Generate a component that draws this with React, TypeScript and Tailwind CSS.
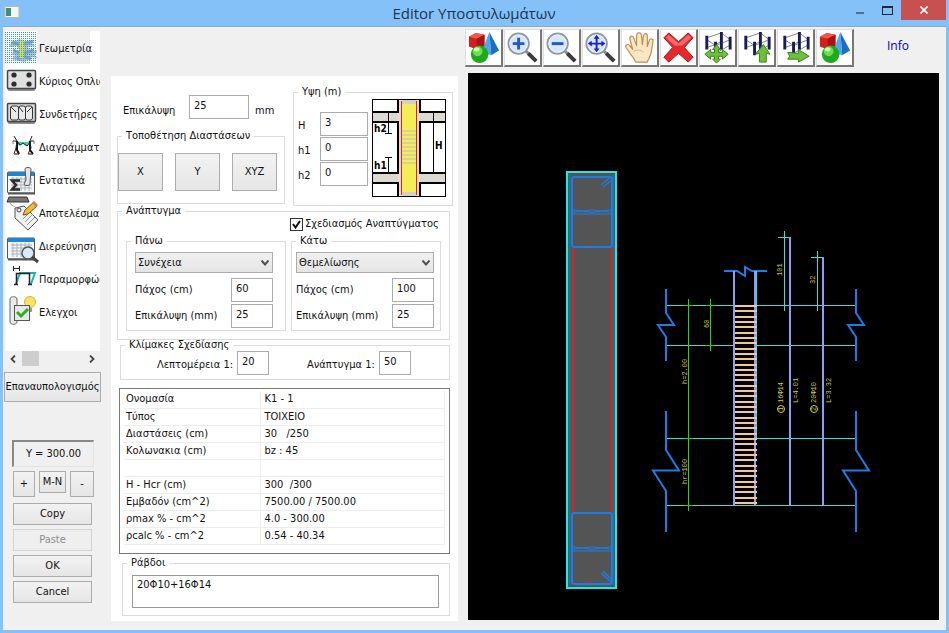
import type { ReactNode } from "react";

/* ---------- sidebar icons (32 x 32) ---------- */

function GeometryIcon() {
  return (
    <>
      <defs>
        <pattern id="dots" width="2" height="2" patternUnits="userSpaceOnUse">
          <rect width="1" height="1" fill="#2f93e0" />
        </pattern>
      </defs>
      <path d="M6 11l8-4 7 2 9-1-3 3 3 3-7 1 3 5 7-2-3 5 3 3-8-1-5 5-6-1-8-2 4-3-4-2 8-4-2-4-8 1z" fill="#b3c3cc" />
      <path d="M7 10l9 3 12-4M8 18l9 4 12-4M12 27l6-3 8 3" fill="none" stroke="#8aa3bd" strokeWidth="3" />
      <path d="M14 9h5v17h-5z" fill="#d7e832" />
      <rect width="32" height="32" fill="url(#dots)" />
    </>
  );
}

function MainBarsIcon() {
  return (
    <>
      <rect x="2.5" y="7" width="28" height="19" rx="2" fill="#8d8d8d" />
      <rect x="2.5" y="5.5" width="28" height="18" rx="1" fill="#e0e0e0" stroke="#444" strokeWidth="1.5" />
      <g fill="#2c2c2c">
        <circle cx="9" cy="10" r="2.6" />
        <circle cx="24" cy="10" r="2.6" />
        <circle cx="9" cy="19" r="2.6" />
        <circle cx="24" cy="19" r="2.6" />
      </g>
    </>
  );
}

function StirrupsIcon() {
  return (
    <>
      <rect x="2.5" y="7" width="28" height="19" rx="2" fill="#8d8d8d" />
      <rect x="2.5" y="5.5" width="28" height="18" rx="1" fill="#dcdcdc" stroke="#444" strokeWidth="1.5" />
      <g fill="#e9e9e9" stroke="#333">
        <rect x="5.5" y="8" width="8" height="14" rx="2" />
        <rect x="13.5" y="8" width="7" height="14" rx="2" />
        <rect x="20.5" y="8" width="7" height="14" rx="2" />
        <path d="M6 9l5 5M14 9l4 5M27 9l-5 5" fill="none" />
      </g>
    </>
  );
}

function DiagramsIcon() {
  return (
    <>
      <path d="M11 10l5 1h5l5-1-4 5-4-2-4 2z" fill="#38d6b4" />
      <path d="M8 10h4l3 4 3-2 4 3 4-5h3" fill="none" stroke="#222" />
      <path d="M12 10v9l2 4M25 10v9l3 4" fill="none" stroke="#111" strokeWidth="2" />
      <path d="M9 5l3 5-1 7-2 6h5M27 5l-2 5 1 7-3 6h5" fill="none" stroke="#222" />
      <path d="M8 10v3M29 10v3M9 23h3M23 23h3" stroke="#e04848" />
    </>
  );
}

function GridTable() {
  return (
    <>
      <rect x="2.5" y="8" width="27" height="21" rx="1" fill="#f4f6f8" stroke="#555" />
      <rect x="3" y="8" width="26" height="4" fill="#1f86d6" />
      <path d="M6 15h21M6 18h21M6 21h21M6 24h21M8 13v14M12 13v14M16 13v14M20 13v14M24 13v14" stroke="#a9b3bb" />
      <path d="M3 29.500h27" stroke="#555" strokeWidth="2" />
    </>
  );
}

function StressIcon() {
  return (
    <>
      <GridTable />
      <path d="M15 16.500h-8l4 4.500-4 4.500h8" fill="none" stroke="#2b2b2b" strokeWidth="2.5" />
      <path d="M20 5c0-2 6-2 6 0l-1 15c0 2-6 2-6 0l2-4z" fill="#e6e6e6" stroke="#555" />
    </>
  );
}

function ResultsIcon() {
  return (
    <>
      <path d="M4 0h18l2 5h-22z" fill="#777" stroke="#333" />
      <path d="M10 11l9-2 14 14-10 10-13-12z" fill="#eef1f4" stroke="#555" />
      <circle cx="14" cy="13" r="2" fill="none" stroke="#444" />
      <path d="M18 22l8-8M20 25l8-8M22 28l8-8M5 6c2 4 5 2 8 7" fill="none" stroke="#999" />
      <path d="M18 18l2-5 9-8 3 4-9 8z" fill="#f2bc2c" stroke="#7a5416" />
      <path d="M27 6l2-2 4 4-2 2z" fill="#d97862" />
    </>
  );
}

function ExploreIcon() {
  return (
    <>
      <GridTable />
      <circle cx="23" cy="23" r="6" fill="#dbeaf7" stroke="#555" strokeWidth="1.5" />
      <path d="M27 27l6 5" stroke="#444" strokeWidth="3" />
    </>
  );
}

function DeformIcon() {
  return (
    <>
      <path d="M8 5.500h7M8.500 3v5M14.500 3v5" stroke="#222" />
      <path d="M11 21l4-11h15l-4 11" fill="none" stroke="#19b3a8" strokeWidth="2" />
      <path d="M9 21.500h4M11.500 21V10.500h13V21M23 21.500h4" fill="none" stroke="#222" strokeWidth="1.5" />
    </>
  );
}

function ChecksIcon() {
  return (
    <>
      <path d="M5 3c0-3 7-3 7 0v23c0 3-7 3-7 0z" fill="#e8eaec" stroke="#666" />
      <circle cx="25" cy="6" r="5.500" fill="#fbe264" stroke="#d9ad2c" />
      <path d="M23 12h4v4h-4z" fill="#999" />
      <rect x="9.500" y="9.500" width="15" height="15" fill="#e6e8e9" stroke="#555" />
      <path d="M12 16l4 4 7-7" fill="none" stroke="#2cae22" strokeWidth="3" />
    </>
  );
}

const tabs: { label: string; icon: ReactNode }[] = [
  { label: "Γεωμετρία", icon: <GeometryIcon /> },
  { label: "Κύριος Οπλισμός", icon: <MainBarsIcon /> },
  { label: "Συνδετήρες", icon: <StirrupsIcon /> },
  { label: "Διαγράμματα", icon: <DiagramsIcon /> },
  { label: "Εντατικά", icon: <StressIcon /> },
  { label: "Αποτελέσματα", icon: <ResultsIcon /> },
  { label: "Διερεύνηση", icon: <ExploreIcon /> },
  { label: "Παραμορφώσεις", icon: <DeformIcon /> },
  { label: "Ελεγχοι", icon: <ChecksIcon /> },
];

/* ---------- toolbar icons (36 x 36) ---------- */

function ShapesIcon() {
  return (
    <>
      <path d="M3 7l7-4 9 2v12l-8 3-8-3z" fill="#d3201c" />
      <path d="M3 7l8 2 8-4-9-2z" fill="#ee5a4a" />
      <path d="M11 9v11l8-3V5z" fill="#a81414" />
      <path d="M24 2l-8 21 10 3z" fill="#4ba8ee" />
      <path d="M24 2l10 19-8 5z" fill="#1a6fc4" />
      <circle cx="14" cy="25" r="9" fill="#22a81c" />
      <circle cx="12" cy="22" r="5" fill="#6be04e" />
      <ellipse cx="11" cy="20" rx="3" ry="2" fill="#c8f7b8" />
    </>
  );
}

function Lens({ children }: { children: ReactNode }) {
  return (
    <>
      <path d="M21 21l11 11" stroke="#8a8a8a" strokeWidth="3" />
      <path d="M24 24l8 8" stroke="#3c3c3c" strokeWidth="4" />
      <circle cx="14" cy="14" r="10.500" fill="#d5e7fb" stroke="#8d99a8" strokeWidth="2" />
      <circle cx="14" cy="14" r="9" fill="none" stroke="#f4f8fc" />
      {children}
    </>
  );
}

function HandIcon() {
  return (
    <>
      <path
        d="M14 33c-1-3-3-5-5-8l-5-7c-1-3 2-4 4-2l3 4-3-11c0-3 3-4 4-1l3 8V6c0-4 4-4 5-1l1 10 1-9c1-3 4-3 4 0v11l2-6c1-3 4-2 4 0l-2 12c-1 5-3 7-4 10z"
        fill="#fbe6c4"
        stroke="#b98f55"
        strokeWidth="1.2"
        strokeLinejoin="round"
      />
      <path d="M12 22c3-2 7-2 10 1" fill="none" stroke="#d9b27c" />
    </>
  );
}

function CrossIcon() {
  return (
    <>
      <path d="M8 3l10 9L28 3l5 5-9 10 9 10-5 5-10-9-10 9-5-5 9-10L3 8z" fill="#e8272d" stroke="#a50d14" strokeLinejoin="round" />
      <path d="M8 5l10 9 10-9 3 3-9 8H14L5 8z" fill="#f46a6a" />
    </>
  );
}

function Frame3D({ children }: { children: ReactNode }) {
  return (
    <>
      <path d="M7 8l15-5 9 7M7 10l9 6 15-6M7 18l9-3 7-4M16 24l14-8" fill="none" stroke="#7c8a7c" />
      <path d="M7 6v14M22 2v18M31 7v13M16 12v14" stroke="#1a1a5c" strokeWidth="3" />
      {children}
    </>
  );
}

const leaf = { fill: "#6fbf3c", stroke: "#3a7d1c", strokeLinejoin: "round" as const };

const tools: { label: string; icon: ReactNode }[] = [
  { label: "Shapes", icon: <ShapesIcon /> },
  { label: "Zoom in", icon: <Lens><path d="M14 8v12M8 14h12" stroke="#2456d0" strokeWidth="3" /></Lens> },
  { label: "Zoom out", icon: <Lens><path d="M8 14h12" stroke="#2456d0" strokeWidth="3" /></Lens> },
  {
    label: "Zoom extents",
    icon: (
      <Lens>
        <path d="M14 8v12M8 14h12" stroke="#1c1ce0" strokeWidth="2" />
        <path d="M14 5l3 4h-6zM14 23l3-4h-6zM5 14l4-3v6zM23 14l-4-3v6z" fill="#1c1ce0" />
      </Lens>
    ),
  },
  { label: "Pan", icon: <HandIcon /> },
  { label: "Delete", icon: <CrossIcon /> },
  {
    label: "Move",
    icon: (
      <Frame3D>
        <path {...leaf} d="M17 15l4 5h-2v3h4v-3l6 5-6 5v-3h-4v3h2l-4 4-4-4h2v-3h-4v3l-6-5 6-5v3h4v-3h-2z" />
      </Frame3D>
    ),
  },
  { label: "Move up", icon: <Frame3D><path {...leaf} d="M25 15l7 10-4-1v9h-7v-9l-4 1z" /></Frame3D> },
  { label: "Move right", icon: <Frame3D><path {...leaf} d="M10 23l11 1v-4l11 7-11 6v-3H10l2-3z" /></Frame3D> },
  { label: "Solids", icon: <ShapesIcon /> },
];

/* ---------- form pieces ---------- */

function Group({ title, className, children }: { title: string; className: string; children: ReactNode }) {
  return (
    <fieldset className={`min-w-0 border border-[#dcdcdc] ${className}`}>
      <legend className="ml-1 px-1 leading-[10px] whitespace-nowrap">{title}</legend>
      {children}
    </fieldset>
  );
}

function Field({ id, value, className }: { id: string; value: string; className: string }) {
  return (
    <input
      id={id}
      defaultValue={value}
      className={`h-6 border border-[#ababab] bg-white pb-1 pl-1 outline-none ${className}`}
    />
  );
}

function PushButton({ children, className }: { children: ReactNode; className: string }) {
  return (
    <button
      type="button"
      className={`border border-[#acacac] bg-linear-to-b from-[#f2f2f2] to-[#e6e6e6] text-center whitespace-nowrap ${className}`}
    >
      {children}
    </button>
  );
}

function Combo({ label, options }: { label: string; options: string[] }) {
  return (
    <div className="relative">
      <select
        aria-label={label}
        className="block h-[21px] w-full appearance-none border border-[#acacac] bg-linear-to-b from-[#f0f0f0] to-[#e5e5e5] pl-0.5 outline-none"
      >
        {options.map((o) => (
          <option key={o}>{o}</option>
        ))}
      </select>
      <svg viewBox="0 0 8 6" className="pointer-events-none absolute top-2 right-1 h-[6px] w-2">
        <path d="M0.500 0.500L4 4.500L7.500 0.500" fill="none" stroke="#505050" strokeWidth="2" />
      </svg>
    </div>
  );
}

function SlabGroup({ id, title, options, thickness, cover, className, bodyClassName }: {
  id: string;
  title: string;
  options: string[];
  thickness: string;
  cover: string;
  className: string;
  bodyClassName: string;
}) {
  return (
    <Group title={title} className={`h-[95px] ${className}`}>
      <div className={`pt-1.5 ${bodyClassName}`}>
        <Combo label={title} options={options} />
        <div className="mt-[5px] flex items-center justify-between">
          <label htmlFor={`${id}-thickness`}>Πάχος (cm)</label>
          <Field id={`${id}-thickness`} value={thickness} className="w-[42px]" />
        </div>
        <div className="mt-0.5 flex items-center justify-between">
          <label htmlFor={`${id}-cover`}>Επικάλυψη (mm)</label>
          <Field id={`${id}-cover`} value={cover} className="w-[42px]" />
        </div>
      </div>
    </Group>
  );
}

function HeightDiagram() {
  return (
    <svg viewBox="0 0 74 98" className="h-[98px] w-[74px]">
      <rect width="74" height="98" fill="#fff" />
      <path d="M1 13h72v9H1zM1 74h72v9H1z" fill="#ddd8d0" />
      <path d="M26 1h22v96H26z" fill="#f6d9cc" />
      <path d="M30 1h14v96H30z" fill="#f1ef55" />
      <path d="M30 1h14v4H30zM30 93h14v4H30z" fill="#d4d0c8" />
      <path d="M30 32h14M30 36h14M30 40h14M30 44h14M30 48h14M30 52h14M30 56h14M30 60h14M30 64h14" stroke="#cfcbb0" strokeWidth="1.500" />
      <path d="M29.500 2v94M44.500 2v94" stroke="#e2231a" />
      <path d="M1 13h25V1M1 23h25v51H1M1 84h25v13M73 13H48V1M73 23H48v51h25M73 84H48v13" fill="none" stroke="#000" strokeWidth="2" />
      <path d="M16.500 13v21M13 34.500h7M13 58.500h7M16.500 58v15M61.500 13v60" stroke="#000" />
      <rect x="0.500" y="0.500" width="73" height="97" fill="none" stroke="#000" />
      <g className="font-['DejaVu_Sans_Condensed','DejaVu_Sans',sans-serif] text-[10px] font-bold">
        <text x="2" y="33">h2</text>
        <text x="2" y="70">h1</text>
        <text x="63" y="50">H</text>
      </g>
    </svg>
  );
}

const rows: [string, string][] = [
  ["Ονομασία", "K1 - 1"],
  ["Τύπος", "ΤΟΙΧΕΙΟ"],
  ["Διαστάσεις (cm)", "30   /250"],
  ["Κολωνακια (cm)", "bz : 45"],
  ["", ""],
  ["H - Hcr (cm)", "300  /300"],
  ["Εμβαδόν (cm^2)", "7500.00 / 7500.00"],
  ["ρmax % - cm^2", "4.0 - 300.00"],
  ["ρcalc % - cm^2", "0.54 - 40.34"],
];

/* ---------- drawing area ---------- */

const ties = Array.from({ length: 38 }, (_, i) => 306 + Math.round(i * 5.32));

function Drawing() {
  return (
    <svg viewBox="468 73 471 547" className="w-full flex-1 bg-black" role="img" aria-label="Column drawing">
      <rect x="567" y="172" width="49" height="416" fill="#545454" stroke="#27e6e6" strokeWidth="2" />
      <path d="M569.500 174v412M613.500 174v412" stroke="#2e6f80" strokeWidth="2" />
      <path d="M573 248v265M611 248v265" stroke="#c8282c" strokeWidth="2" />
      <g fill="none" stroke="#1c7ce8" strokeWidth="2">
        <rect x="572" y="177" width="40" height="70" rx="2" />
        <rect x="572" y="513" width="40" height="71" rx="2" />
        <path d="M572 209.500l20 3 20-3M572 212l20-2 20 2M572 214h40M572 546.500l20 3 20-3M572 549l20-2 20 2M572 551h40" strokeWidth="1" />
        <path d="M601 185l9-7M603 187l9-7M601 573l10 9M603 571l9 9" strokeWidth="1.500" />
      </g>
      <path d="M588 245h4M588 581h4M573 582h2" stroke="#c8282c" />

      <g stroke="#35e0dc">
        <path d="M666 305.500h189M666 345.500h68M756 345.500h99M666 438.500h189M666 505.500h189" />
        <path d="M784.500 231v80M778 237.500h12M817.500 251v60M811 257.500h12" />
      </g>

      <g fill="none" stroke="#1c7ce8" strokeWidth="2">
        <path d="M724 271h13l8 5v-9l7 4h15" />
        <path d="M666 289v24l8 12h-16l8 12v24" />
        <path d="M856 289v24l8 12h-16l8 12v24" />
        <path d="M666 411v39l13 20.500h-26l13 20.500v41" />
        <path d="M856 411v39l13 20.500h-26l13 20.500v41" />
      </g>

      <path d="M734 271v234M755 271v234M790 237v268M823 257v248" stroke="#8f9df2" strokeWidth="2" />
      <path d="M756.500 271v167" stroke="#35e0dc" />
      <g stroke="#f6c594" strokeWidth="2">
        {ties.map((y) => (
          <path key={y} d={`M735 ${y}h22`} />
        ))}
      </g>

      <g stroke="#2bd321">
        <path d="M688.500 299v212M710.500 299v52" />
        <path d="M684 305.500h9M706 305.500h9M705 345.500h9M684 438.500h9M684 505.500h9" />
      </g>

      <g fill="#cfcf3c" className="font-['Liberation_Mono',monospace] text-[7px]">
        <text transform="translate(782 276) rotate(-90)">101</text>
        <text transform="translate(815 284) rotate(-90)">32</text>
        <text transform="translate(709 328) rotate(-90)">60</text>
        <text transform="translate(687 384) rotate(-90)">h=2.00</text>
        <text transform="translate(687 484) rotate(-90)">hr=100</text>
        <text transform="translate(783 403) rotate(-90)">16Φ14</text>
        <text transform="translate(798 403) rotate(-90)">L=4.01</text>
        <text transform="translate(816 403) rotate(-90)">20Φ10</text>
        <text transform="translate(831 403) rotate(-90)">L=3.32</text>
        <text transform="translate(783 411) rotate(-90)">1</text>
        <text transform="translate(816 411) rotate(-90)">2</text>
      </g>
      <g fill="none" stroke="#cfcf3c">
        <circle cx="781" cy="409" r="3.500" />
        <circle cx="814" cy="409" r="3.500" />
      </g>
    </svg>
  );
}

export default function App() {
  return (
    <div className="flex min-h-screen flex-col bg-[#84c1f8] font-['DejaVu_Sans_Condensed','DejaVu_Sans',sans-serif] text-[11px] leading-[14px] text-[#111]">
      <header className="flex h-[26px] items-start">
        <svg viewBox="0 0 16 12" className="mt-1.5 ml-1 h-3 w-4">
          <rect x="1" y="0.500" width="14" height="11" fill="#f4f4f4" stroke="#b9b9b9" />
          <rect x="2" y="2" width="5" height="8" fill="#3f8f78" />
        </svg>
        <h1 className="flex-1 pl-[72px] text-center font-['Open_Sans','Noto_Sans',sans-serif] text-[15px] leading-[26px] text-[#1c3550]">
          Editor Υποστυλωμάτων
        </h1>
        <button type="button" aria-label="Minimize" className="mt-3 mr-[18px] h-0.5 w-2 bg-[#4b6f92]" />
        <button type="button" aria-label="Maximize" className="mt-1.5 mr-2 h-[9px] w-[11px] border border-t-2 border-[#1e2a36]" />
        <button type="button" aria-label="Close" className="mr-[3px] flex h-5 w-[45px] items-center justify-center bg-[#c75050]">
          <svg viewBox="0 0 8 8" className="h-2 w-2">
            <path d="M0.500 0.500l7 7M7.500 0.500l-7 7" stroke="#fff" strokeWidth="1.600" />
          </svg>
        </button>
      </header>

      <main className="mx-[3px] mb-[3px] flex flex-1 border-t border-[#8fa9c2] bg-[#f0f0f0]">
        <aside className="flex w-[98px] shrink-0 flex-col pl-px">
          <nav className="mt-1 mr-px ml-px h-80 overflow-hidden bg-white">
            {tabs.map((t, i) => (
              <button key={t.label} type="button" className="flex h-[33px] w-max items-end text-left">
                <svg viewBox="0 0 32 32" className="h-8 w-8 shrink-0 overflow-visible">
                  {t.icon}
                </svg>
                <span
                  className={
                    i === 0
                      ? "flex h-[33px] w-[53px] items-center bg-[#f0f0f0] pt-0.5 pl-0.5"
                      : "flex h-[33px] items-center pt-0.5 pl-0.5"
                  }
                >
                  {t.label}
                </span>
              </button>
            ))}
          </nav>
          <div className="flex h-[15px] items-center justify-between pr-1.5 pl-1.5">
            <div className="flex items-center gap-1.5">
              <svg viewBox="0 0 6 8" className="h-2 w-[6px]"><path d="M5 0.500L1.500 4L5 7.500" fill="none" stroke="#444" strokeWidth="1.800" /></svg>
              <span className="h-[15px] w-[17px] bg-[#cdcdcd]" />
            </div>
            <svg viewBox="0 0 6 8" className="h-2 w-[6px]"><path d="M1 0.500L4.500 4L1 7.500" fill="none" stroke="#444" strokeWidth="1.800" /></svg>
          </div>
          <PushButton className="mt-1.5 h-[30px] px-0">Επαναυπολογισμός</PushButton>
          <div className="mt-[38px] mr-[7px] ml-2 flex flex-col">
            <output className="h-[27px] border border-t-2 border-l-2 border-[#e3e3e3] border-t-[#8a8a8a] border-l-[#8a8a8a] text-center leading-6">
              Y = 300.00
            </output>
            <div className="mt-1 ml-px flex items-start justify-between">
              <PushButton className="h-[26px] w-[22px]">+</PushButton>
              <PushButton className="h-[22px] w-[27px]">M-N</PushButton>
              <PushButton className="h-[26px] w-6">-</PushButton>
            </div>
            <div className="mt-1.5 mr-0.5 ml-px flex flex-col gap-1">
              <PushButton className="h-[22px]">Copy</PushButton>
              <button type="button" disabled className="h-[22px] border border-[#d4d4d4] bg-[#efefef] text-center text-[#8c8c8c]">
                Paste
              </button>
              <PushButton className="h-[22px]">OK</PushButton>
              <PushButton className="h-[22px]">Cancel</PushButton>
            </div>
          </div>
        </aside>

        <section className="mt-[49px] mb-[9px] ml-2.5 flex w-[347px] shrink-0 flex-col bg-white pt-[11px] pl-1.5">
          <div className="flex">
            <div className="flex w-[168px] flex-col pt-2">
              <div className="flex items-center gap-1.5">
                <label htmlFor="cover" className="w-[65px] pt-2 pl-1.5">Επικάλυψη</label>
                <Field id="cover" value="25" className="ml-px w-[60px]" />
                <span className="pt-2">mm</span>
              </div>
              <Group title="Τοποθέτηση Διαστάσεων" className="mt-3 h-[73px]">
                <div className="mt-3 flex gap-3">
                  <PushButton className="h-[38px] w-[45px]">X</PushButton>
                  <PushButton className="h-[38px] w-[45px]">Y</PushButton>
                  <PushButton className="h-[38px] w-[45px]">XYZ</PushButton>
                </div>
              </Group>
            </div>
            <Group title="Υψη (m)" className="ml-2 h-[119px] w-[160px]">
              <div className="flex gap-1 pl-1">
                <div className="mt-[15px] grid grid-cols-[22px_48px] content-start items-center gap-y-[1px]">
                  <label htmlFor="height" className="pt-1">H</label>
                  <Field id="height" value="3" className="w-12" />
                  <label htmlFor="h1" className="pt-1">h1</label>
                  <Field id="h1" value="0" className="w-12" />
                  <label htmlFor="h2" className="pt-1">h2</label>
                  <Field id="h2" value="0" className="w-12" />
                </div>
                <div className="mt-0.5">
                  <HeightDiagram />
                </div>
              </div>
            </Group>
          </div>

          <Group title="Ανάπτυγμα" className="h-[134px] w-[333px]">
            <label className="ml-[172px] flex items-center gap-0.5 pt-px whitespace-nowrap">
              <span className="relative flex">
                <input type="checkbox" defaultChecked className="peer h-[13px] w-[13px] appearance-none border border-[#333] bg-white" />
                <svg viewBox="0 0 13 13" className="pointer-events-none absolute inset-0 hidden h-[13px] w-[13px] peer-checked:block">
                  <path d="M3 6l2.500 3.500L10 3" fill="none" stroke="#111" strokeWidth="2" />
                </svg>
              </span>
              Σχεδιασμός Αναπτύγματος
            </label>
            <div className="mt-[5px] ml-2 flex gap-[5px]">
              <SlabGroup id="top" title="Πάνω" options={["Συνέχεια", "Αναμονές"]} thickness="60" cover="25" className="w-[160px]" bodyClassName="pr-3 pl-2" />
              <SlabGroup id="bottom" title="Κάτω" options={["Θεμελίωσης", "Συνέχεια"]} thickness="100" cover="25" className="w-[150px]" bodyClassName="pr-1.5 pl-1" />
            </div>
          </Group>

          <Group title="Κλίμακες Σχεδίασης" className="ml-[3px] h-10 w-[330px]">
            <div className="flex items-center gap-1 pt-px pl-9">
              <label htmlFor="detail" className="pt-1">Λεπτομέρεια 1:</label>
              <Field id="detail" value="20" className="w-8" />
              <label htmlFor="elevation" className="ml-[34px] pt-1">Ανάπτυγμα 1:</label>
              <Field id="elevation" value="50" className="w-8" />
            </div>
          </Group>

          <div className="mt-2 ml-0.5 h-[166px] w-[331px] border border-[#7a7a7a] px-1 pt-0.5">
            <table className="w-full table-fixed border-collapse">
              <tbody>
                {rows.map(([name, value], i) => (
                  <tr key={i} className="h-[17px] border-r border-b border-[#ededed]">
                    <td className="w-[136px] border-r border-[#ededed] p-0 pl-0.5">{name}</td>
                    <td className="p-0 pl-1 whitespace-pre">{value}</td>
                  </tr>
                ))}
              </tbody>
            </table>
          </div>

          <Group title="Ράβδοι" className="mt-1 mb-1 ml-[5px] w-[328px] pb-[7px]">
            <textarea
              aria-label="Ράβδοι"
              defaultValue="20Φ10+16Φ14"
              className="mt-[7px] ml-[9px] block h-[33px] w-[307px] resize-none border border-[#9a9a9a] px-1 py-0.5 outline-none"
            />
          </Group>
        </section>

        <section className="mr-[7px] mb-2.5 ml-[7px] flex min-w-0 flex-1 flex-col">
          <div className="mt-0.5 flex items-center gap-px">
            {tools.map((t) => (
              <button
                key={t.label}
                type="button"
                aria-label={t.label}
                className="h-[38px] w-[38px] shrink-0 border border-r-2 border-b-2 border-[#dedede] border-r-[#777] border-b-[#777] bg-white"
              >
                <svg viewBox="0 0 36 36" className="block h-[35px] w-[35px]">{t.icon}</svg>
              </button>
            ))}
            <a href="#info" className="ml-8 pb-1 font-['Open_Sans','Noto_Sans',sans-serif] text-xs text-[#0000c8]">Info</a>
          </div>
          <div className="mt-1.5 ml-[3px] flex flex-1">
            <Drawing />
          </div>
        </section>
      </main>
    </div>
  );
}
